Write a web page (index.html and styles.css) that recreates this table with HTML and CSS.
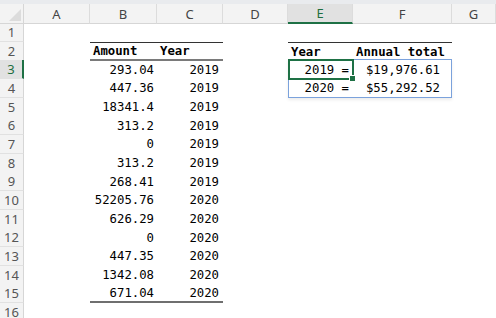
FILE: index.html
```html
<!DOCTYPE html>
<html lang="en">
<head>
    <meta charset="UTF-8">
    <title>Annual totals</title>
    <link rel="stylesheet" href="styles.css">
</head>
<body>
    <div class="sheet">
        <div class="colhead">
            <div class="corner"><span class="tri"></span></div>
            <div class="ch">A</div>
            <div class="ch">B</div>
            <div class="ch">C</div>
            <div class="ch">D</div>
            <div class="ch sel">E</div>
            <div class="ch">F</div>
            <div class="ch">G</div>
        </div>

        <div class="row"><div class="rh">1</div><div></div><div></div><div></div><div></div><div></div><div></div><div></div></div>
        <div class="row"><div class="rh">2</div><div></div><div class="th top under">Amount</div><div class="th top under">Year</div><div></div><div class="th top">Year</div><div class="th top">Annual total</div><div></div></div>
        <div class="row"><div class="rh sel">3</div><div></div><div class="num">293.04</div><div class="num yr">2019</div><div></div><div class="num yr">2019 =</div><div class="num money">$19,976.61</div><div></div></div>
        <div class="row"><div class="rh">4</div><div></div><div class="num">447.36</div><div class="num yr">2019</div><div></div><div class="num yr">2020 =</div><div class="num money">$55,292.52</div><div></div></div>
        <div class="row"><div class="rh">5</div><div></div><div class="num">18341.4</div><div class="num yr">2019</div><div></div><div></div><div></div><div></div></div>
        <div class="row"><div class="rh">6</div><div></div><div class="num">313.2</div><div class="num yr">2019</div><div></div><div></div><div></div><div></div></div>
        <div class="row"><div class="rh">7</div><div></div><div class="num">0</div><div class="num yr">2019</div><div></div><div></div><div></div><div></div></div>
        <div class="row"><div class="rh">8</div><div></div><div class="num">313.2</div><div class="num yr">2019</div><div></div><div></div><div></div><div></div></div>
        <div class="row"><div class="rh">9</div><div></div><div class="num">268.41</div><div class="num yr">2019</div><div></div><div></div><div></div><div></div></div>
        <div class="row"><div class="rh">10</div><div></div><div class="num">52205.76</div><div class="num yr">2020</div><div></div><div></div><div></div><div></div></div>
        <div class="row"><div class="rh">11</div><div></div><div class="num">626.29</div><div class="num yr">2020</div><div></div><div></div><div></div><div></div></div>
        <div class="row"><div class="rh">12</div><div></div><div class="num">0</div><div class="num yr">2020</div><div></div><div></div><div></div><div></div></div>
        <div class="row"><div class="rh">13</div><div></div><div class="num">447.35</div><div class="num yr">2020</div><div></div><div></div><div></div><div></div></div>
        <div class="row"><div class="rh">14</div><div></div><div class="num">1342.08</div><div class="num yr">2020</div><div></div><div></div><div></div><div></div></div>
        <div class="row"><div class="rh">15</div><div></div><div class="num bottom">671.04</div><div class="num yr bottom">2020</div><div></div><div></div><div></div><div></div></div>
        <div class="row"><div class="rh">16</div><div></div><div></div><div></div><div></div><div></div><div></div><div></div></div>

        <!-- selection overlays -->
        <div class="range"></div>
        <div class="active"><span class="handle"></span></div>
    </div>
</body>
</html>
```

FILE: styles.css
```css
body {
    margin: 0;
    background-color: #fff;
    overflow: hidden;
}

.sheet {
    position: relative;
    width: 496px;
    height: 318px;
    font-family: "DejaVu Sans Mono", monospace;
    font-size: 12.3px;
    color: #000;
}

.colhead,
.row {
    display: grid;
    grid-template-columns: 24px 66px 67px 66px 65px 65px 99px 1fr;
}

.colhead {
    height: 23px;
    background-color: #f3f3f3;
    border-top: 4px solid #e9ebee;
    box-sizing: border-box;
}

.corner {
    position: relative;
    border-right: 1px solid #d6d6d6;
    border-bottom: 1px solid #d6d6d6;
}

.tri {
    position: absolute;
    right: 2px;
    bottom: 2px;
    width: 0;
    height: 0;
    border-left: 12px solid transparent;
    border-bottom: 12px solid #dcdcdc;
}

.ch {
    display: flex;
    align-items: center;
    justify-content: center;
    font-family: "Noto Sans", sans-serif;
    font-size: 13px;
    color: #444;
    border-right: 1px solid #dcdcdc;
    border-bottom: 1px solid #d6d6d6;
}

.ch.sel {
    background-color: #e1e1e1;
    color: #1e6e3f;
    border-bottom: 2px solid #1e7145;
}

.row {
    height: 18.67px;
}

.row > div {
    box-sizing: border-box;
    display: flex;
    align-items: center;
    white-space: nowrap;
    overflow: visible;
}

.rh {
    justify-content: center;
    background-color: #f3f3f3;
    font-family: "Noto Sans", sans-serif;
    font-size: 13px;
    color: #555;
    border-right: 1px solid #d6d6d6;
    border-bottom: 1px solid #e1e1e1;
}

.rh.sel {
    background-color: #e1e1e1;
    color: #1e6e3f;
    border-right: 2px solid #1e7145;
}

.th {
    font-weight: bold;
    padding-left: 3px;
}

.top {
    border-top: 1px solid #333;
}

.under {
    border-bottom: 2px solid #7a7a7a;
}

.num {
    justify-content: flex-end;
    padding-right: 3px;
}

.yr {
    padding-right: 4px;
}

.money {
    padding-right: 12px;
}

.bottom {
    border-bottom: 2px solid #6f6f6f;
}

.range {
    position: absolute;
    left: 288px;
    top: 59px;
    width: 164px;
    height: 39px;
    box-sizing: border-box;
    border: 1px solid #7ba2dc;
    box-shadow: 0 2px 3px rgba(0, 0, 0, 0.08);
}

.active {
    position: absolute;
    left: 288px;
    top: 59px;
    width: 66px;
    height: 21px;
    box-sizing: border-box;
    border: 2px solid #1e7145;
}

.handle {
    position: absolute;
    right: -4px;
    bottom: -4px;
    width: 5px;
    height: 5px;
    background-color: #1e7145;
    border: 1px solid #fff;
}
```
